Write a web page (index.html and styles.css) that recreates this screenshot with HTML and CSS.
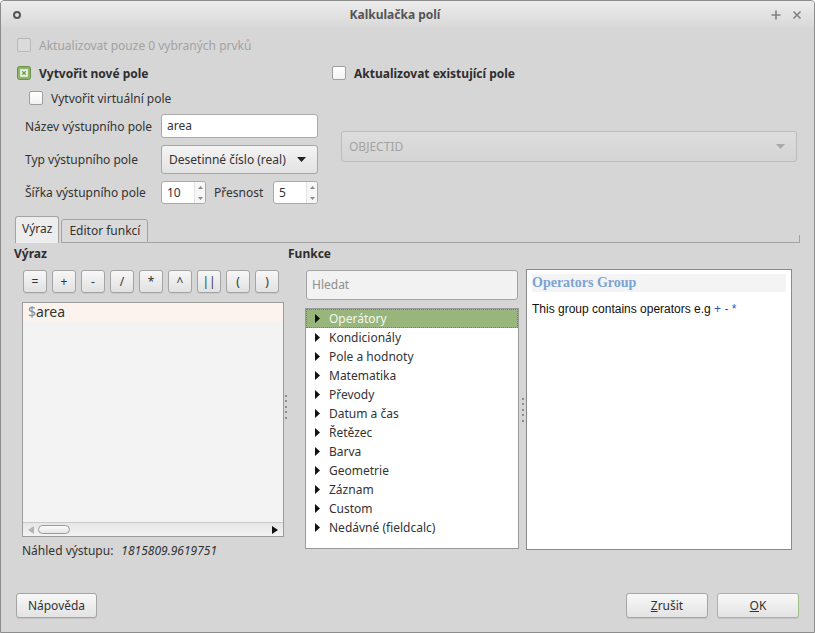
FILE: index.html
```html
<!DOCTYPE html>
<html lang="cs">
<head>
<meta charset="utf-8">
<title>Kalkulačka polí</title>
<link rel="stylesheet" href="styles.css">
</head>
<body>
<div class="window">
  <div class="titlebar">
    <span class="tb-icon"></span>
    <span class="tb-title">Kalkulačka polí</span>
    <span class="tb-btns">
      <svg class="tb-btn" width="14" height="14" viewBox="0 0 14 14"><path d="M7 2.5v9M2.5 7h9" stroke="#808080" stroke-width="1.6"/></svg>
      <svg class="tb-btn" width="14" height="14" viewBox="0 0 14 14"><path d="M3.5 3.5l7 7M10.5 3.5l-7 7" stroke="#808080" stroke-width="1.6"/></svg>
    </span>
  </div>
  <div class="content">
    <div class="check disabled row-first"><span class="box"></span>Aktualizovat pouze 0 vybraných prvků</div>
    <div class="top">
      <div class="top-left">
        <div class="check bold">
          <svg class="box-svg" width="14" height="14" viewBox="0 0 14 14"><rect x="0.5" y="0.5" width="13" height="13" rx="2" fill="#8db66b" stroke="#6c914c"/><rect x="3.5" y="3.5" width="7" height="7" fill="#eef4e8" stroke="#d8e6cc"/><path d="M5.2 5.2l3.6 3.6M8.8 5.2l-3.6 3.6" stroke="#6f9d4c" stroke-width="1.4"/></svg>
          Vytvořit nové pole
        </div>
        <div class="check indent"><span class="box"></span>Vytvořit virtuální pole</div>
        <div class="form">
          <span class="lbl">Název výstupního pole</span>
          <div class="input">area</div>
          <span class="lbl">Typ výstupního pole</span>
          <div class="combo">Desetinné číslo (real)
            <svg class="combo-arrow" width="9" height="5" viewBox="0 0 9 5"><polygon points="0,0 9,0 4.5,5" fill="#222"/></svg>
          </div>
          <span class="lbl">Šířka výstupního pole</span>
          <div class="spins">
            <div class="spin"><span class="spin-val">10</span><span class="spin-arrows"><svg width="5" height="3" viewBox="0 0 5 3"><polygon points="0,3 5,3 2.5,0" fill="#8a8a8a"/></svg><svg width="5" height="3" viewBox="0 0 5 3"><polygon points="0,0 5,0 2.5,3" fill="#8a8a8a"/></svg></span></div>
            <span class="spin-lbl">Přesnost</span>
            <div class="spin"><span class="spin-val">5</span><span class="spin-arrows"><svg width="5" height="3" viewBox="0 0 5 3"><polygon points="0,3 5,3 2.5,0" fill="#8a8a8a"/></svg><svg width="5" height="3" viewBox="0 0 5 3"><polygon points="0,0 5,0 2.5,3" fill="#8a8a8a"/></svg></span></div>
          </div>
        </div>
      </div>
      <div class="top-right">
        <div class="check bold"><span class="box"></span>Aktualizovat existující pole</div>
        <div class="combo combo-disabled">OBJECTID
          <svg class="combo-arrow" width="9" height="5" viewBox="0 0 9 5"><polygon points="0,0 9,0 4.5,5" fill="#a9a9a9"/></svg>
        </div>
      </div>
    </div>

    <div class="tabbar">
      <div class="tab active">Výraz</div>
      <div class="tab">Editor funkcí</div>
      <div class="tab-fill"></div>
    </div>

    <div class="pane">
      <div class="col-expr">
        <div class="section-lbl">Výraz</div>
        <div class="ops">
          <button class="op">=</button><button class="op">+</button><button class="op">-</button><button class="op">/</button><button class="op">*</button><button class="op">^</button><button class="op">||</button><button class="op">(</button><button class="op">)</button>
        </div>
        <div class="editor">
          <div class="editor-line"><span class="dollar">$</span>area</div>
          <div class="hscroll">
            <svg width="6" height="8" viewBox="0 0 6 8"><polygon points="6,0 6,8 0,4" fill="#b3b3b3"/></svg>
            <span class="thumb"></span>
            <svg class="right-arrow" width="6" height="8" viewBox="0 0 6 8"><polygon points="0,0 0,8 6,4" fill="#111"/></svg>
          </div>
        </div>
        <div class="preview"><span>Náhled výstupu:</span><span class="preview-val">1815809.9619751</span></div>
      </div>
      <div class="splitter"><span class="dots"><i></i><i></i><i></i><i></i><i></i></span></div>
      <div class="col-func">
        <div class="section-lbl">Funkce</div>
        <div class="func-grid">
          <div class="func-list-col">
            <div class="search">Hledat</div>
            <div class="tree">
              <div class="tree-row selected"><svg width="6" height="9" viewBox="0 0 6 9"><polygon points="0,0 5,4.5 0,9" fill="#111"/></svg><span>Operátory</span></div>
              <div class="tree-row"><svg width="6" height="9" viewBox="0 0 6 9"><polygon points="0,0 5,4.5 0,9" fill="#111"/></svg><span>Kondicionály</span></div>
              <div class="tree-row"><svg width="6" height="9" viewBox="0 0 6 9"><polygon points="0,0 5,4.5 0,9" fill="#111"/></svg><span>Pole a hodnoty</span></div>
              <div class="tree-row"><svg width="6" height="9" viewBox="0 0 6 9"><polygon points="0,0 5,4.5 0,9" fill="#111"/></svg><span>Matematika</span></div>
              <div class="tree-row"><svg width="6" height="9" viewBox="0 0 6 9"><polygon points="0,0 5,4.5 0,9" fill="#111"/></svg><span>Převody</span></div>
              <div class="tree-row"><svg width="6" height="9" viewBox="0 0 6 9"><polygon points="0,0 5,4.5 0,9" fill="#111"/></svg><span>Datum a čas</span></div>
              <div class="tree-row"><svg width="6" height="9" viewBox="0 0 6 9"><polygon points="0,0 5,4.5 0,9" fill="#111"/></svg><span>Řetězec</span></div>
              <div class="tree-row"><svg width="6" height="9" viewBox="0 0 6 9"><polygon points="0,0 5,4.5 0,9" fill="#111"/></svg><span>Barva</span></div>
              <div class="tree-row"><svg width="6" height="9" viewBox="0 0 6 9"><polygon points="0,0 5,4.5 0,9" fill="#111"/></svg><span>Geometrie</span></div>
              <div class="tree-row"><svg width="6" height="9" viewBox="0 0 6 9"><polygon points="0,0 5,4.5 0,9" fill="#111"/></svg><span>Záznam</span></div>
              <div class="tree-row"><svg width="6" height="9" viewBox="0 0 6 9"><polygon points="0,0 5,4.5 0,9" fill="#111"/></svg><span>Custom</span></div>
              <div class="tree-row"><svg width="6" height="9" viewBox="0 0 6 9"><polygon points="0,0 5,4.5 0,9" fill="#111"/></svg><span>Nedávné (fieldcalc)</span></div>
            </div>
          </div>
          <div class="splitter small"><span class="dots"><i></i><i></i><i></i><i></i><i></i></span></div>
          <div class="help">
            <h3 class="help-title">Operators Group</h3>
            <p class="help-text">This group contains operators e.g <span class="code">+ - *</span></p>
          </div>
        </div>
      </div>
    </div>

    <div class="footer">
      <button class="btn btn-help">Nápověda</button>
      <span class="footer-fill"></span>
      <button class="btn"><u>Z</u>rušit</button>
      <button class="btn btn-ok"><u>O</u>K</button>
    </div>
  </div>
</div>
</body>
</html>
```

FILE: styles.css
```css
* { box-sizing: border-box; }

body {
  margin: 0;
  background: #ffffff;
  font-family: "Noto Sans", sans-serif;
  font-size: 12px;
  color: #333333;
}

.window {
  width: 815px;
  height: 633px;
  border: 1px solid #8c8c8c;
  border-radius: 4px 4px 0 0;
  background: #d6d6d6;
  display: flex;
  flex-direction: column;
  overflow: hidden;
}

/* title bar */
.titlebar {
  flex: none;
  height: 27px;
  display: flex;
  align-items: center;
  background: linear-gradient(#ececec, #d8d8d8);
}
.tb-icon {
  width: 8px;
  height: 8px;
  margin-left: 12px;
  border: 2px solid #555555;
  border-radius: 50%;
}
.tb-title {
  flex: 1;
  text-align: center;
  font-weight: bold;
  color: #555555;
  font-size: 12px;
}
.tb-btns {
  display: flex;
  gap: 7px;
  padding-right: 10px;
}
.tb-btn { display: block; }

/* content */
.content {
  flex: 1;
  display: flex;
  flex-direction: column;
  padding: 0 14px 0 16px;
}

.check {
  display: flex;
  align-items: center;
  height: 20px;
  gap: 8px;
  white-space: nowrap;
}
.check.bold { font-weight: bold; color: #2e2e2e; }
.check.disabled { color: #a2a2a2; }
.check.indent { margin-top: 5px; margin-left: 12px; }

.box {
  flex: none;
  width: 14px;
  height: 14px;
  border: 1px solid #9e9e9e;
  border-radius: 2px;
  background: linear-gradient(#ffffff, #f2f2f2);
}
.check.disabled .box {
  border-color: #bababa;
  background: #dadada;
}
.box-svg { flex: none; }

.row-first { margin-top: 7px; }

.top {
  display: grid;
  grid-template-columns: 303px 1fr;
  column-gap: 12px;
  margin-top: 8px;
}

.form {
  display: grid;
  grid-template-columns: 136px 157px;
  row-gap: 7px;
  margin-top: 6px;
  margin-left: 8px;
  align-items: center;
}
.lbl { white-space: nowrap; }

.input {
  height: 24px;
  border: 1px solid #a9a9a9;
  border-radius: 3px;
  background: #ffffff;
  padding: 0 5px;
  line-height: 22px;
}

.combo {
  height: 29px;
  border: 1px solid #a6a6a6;
  border-radius: 3px;
  background: linear-gradient(#f4f4f4, #e2e2e2);
  padding: 0 7px;
  line-height: 27px;
  display: flex;
  align-items: center;
  justify-content: space-between;
}
.combo-disabled {
  height: 31px;
  margin-top: 48px;
  margin-left: 9px;
  margin-right: 3px;
  color: #a3a3a3;
  border-color: #bcbcbc;
  background: linear-gradient(#dddddd, #d4d4d4);
}
.combo-arrow { flex: none; margin-right: 4px; }

.spins {
  display: flex;
  align-items: center;
}
.spin {
  width: 45px;
  height: 23px;
  border: 1px solid #a9a9a9;
  border-radius: 3px;
  background: #ffffff;
  display: flex;
}
.spin:last-child { margin-left: auto; }
.spin-val {
  flex: 1;
  padding-left: 5px;
  line-height: 21px;
}
.spin-arrows {
  width: 11px;
  border-left: 1px solid #e2e2e2;
  display: flex;
  flex-direction: column;
  justify-content: space-between;
  align-items: center;
  padding: 4px 0 3px;
  background: #f7f7f7;
  border-radius: 0 3px 3px 0;
}
.spin-lbl { margin-left: 8px; }

/* tabs */
.tabbar {
  display: flex;
  align-items: flex-end;
  height: 27px;
  margin-top: 12px;
  margin-left: -2px;
}
.tab {
  height: 24px;
  border: 1px solid #a3a3a3;
  border-radius: 3px 3px 0 0;
  background: #d9d9d9;
  padding: 0 7px;
  line-height: 22px;
  margin-left: 2px;
}
.tab.active {
  height: 27px;
  margin-left: 0;
  border-bottom: none;
  background: #ededed;
  padding: 0 6px;
  line-height: 24px;
}
.tab:not(.active) { border-bottom: 1px solid #a3a3a3; }
.tab-fill {
  flex: 1;
  height: 8px;
  border-bottom: 1px solid #a3a3a3;
  border-right: 1px solid #a3a3a3;
}

/* pane */
.pane {
  display: grid;
  grid-template-columns: 270px 4px 512px;
  margin-left: -3px;
  height: 327px;
}
.section-lbl {
  height: 20px;
  margin-top: 1px;
  line-height: 20px;
  font-weight: bold;
  color: #2e2e2e;
}

.col-expr { display: flex; flex-direction: column; }
.ops {
  display: flex;
  gap: 5px;
  margin-top: 6px;
  margin-left: 9px;
}
.op {
  width: 24px;
  height: 23px;
  padding: 0;
  border: 1px solid #a4a4a4;
  border-radius: 3px;
  background: linear-gradient(#f7f7f7, #e1e1e1);
  font-family: "Noto Sans", sans-serif;
  font-size: 12px;
  color: #333333;
  box-shadow: 0 1px 0 rgba(0,0,0,0.06);
}

.editor {
  margin-top: 9px;
  margin-left: 8px;
  width: 262px;
  height: 235px;
  border: 1px solid #9c9c9c;
  background: #f3f3f3;
  display: flex;
  flex-direction: column;
}
.editor-line {
  height: 18px;
  background: #fcf3ee;
  padding-left: 5px;
  font-size: 14px;
  line-height: 18px;
  color: #333333;
}
.dollar { color: #8a8a8a; }
.hscroll {
  margin-top: auto;
  height: 14px;
  border-top: 1px solid #c9c9c9;
  background: linear-gradient(#e6e6e6, #f3f3f3);
  display: flex;
  align-items: center;
  padding: 0 5px;
}
.thumb {
  width: 32px;
  height: 9px;
  margin-left: 4px;
  border: 1px solid #9a9a9a;
  border-radius: 5px;
  background: linear-gradient(#fbfbfb, #e6e6e6);
}
.right-arrow { margin-left: auto; }

.preview {
  margin-top: 4px;
  margin-left: 8px;
  height: 20px;
  line-height: 20px;
  display: flex;
}
.preview-val {
  margin-left: 8px;
  font-style: italic;
}

.splitter {
  display: flex;
  align-items: center;
  padding-left: 1px;
}
.dots {
  display: flex;
  flex-direction: column;
  gap: 3.5px;
}
.dots i {
  display: block;
  width: 2px;
  height: 2px;
  background: #8e8e8e;
}
.splitter.small {
  justify-content: center;
  padding-left: 0;
}

.col-func { display: flex; flex-direction: column; }
.func-grid {
  display: grid;
  grid-template-columns: 214px 7px 266px;
  margin-top: 5px;
  margin-left: 17px;
  height: 281px;
}
.func-list-col { display: flex; flex-direction: column; }
.search {
  margin: 1px 1px 0;
  height: 30px;
  border: 1px solid #a4a4a4;
  border-radius: 3px;
  background: #f2f2f2;
  padding: 0 5px;
  line-height: 28px;
  color: #8f8f8f;
}
.tree {
  margin-top: 8px;
  height: 241px;
  border: 1px solid #9a9a9a;
  background: #ffffff;
}
.tree-row {
  height: 19px;
  display: flex;
  align-items: center;
  padding-left: 9px;
  gap: 8px;
}
.tree-row.selected {
  background: #98b57b;
  outline: 1px dotted #6e8a55;
  outline-offset: -1px;
  color: #f4f7ef;
}

.help {
  border: 1px solid #8a8a8a;
  background: #ffffff;
  padding: 4px 5px 0;
}
.help-title {
  margin: 0;
  height: 18px;
  line-height: 18px;
  background: #f4f4f4;
  font-family: "Liberation Serif", serif;
  font-size: 14px;
  font-weight: bold;
  color: #7ca3d6;
}
.help-text {
  margin: 8px 0 0;
  font-family: "Liberation Sans", sans-serif;
  font-size: 12px;
  line-height: 18px;
  color: #111111;
}
.code { color: #3553a8; }

/* footer */
.footer {
  display: flex;
  gap: 9px;
  margin-top: 23px;
  height: 25px;
  margin-left: -1px;
  margin-right: 1px;
}
.footer-fill { flex: 1; }
.btn {
  width: 82px;
  height: 25px;
  padding: 0;
  border: 1px solid #a4a4a4;
  border-radius: 3px;
  background: linear-gradient(#f8f8f8, #e3e3e3);
  font-family: "Noto Sans", sans-serif;
  font-size: 12px;
  color: #333333;
  box-shadow: 0 1px 0 rgba(0,0,0,0.08);
}
.btn-help { width: 81px; }
.btn-ok { border-color: #9dbf88; }
```
